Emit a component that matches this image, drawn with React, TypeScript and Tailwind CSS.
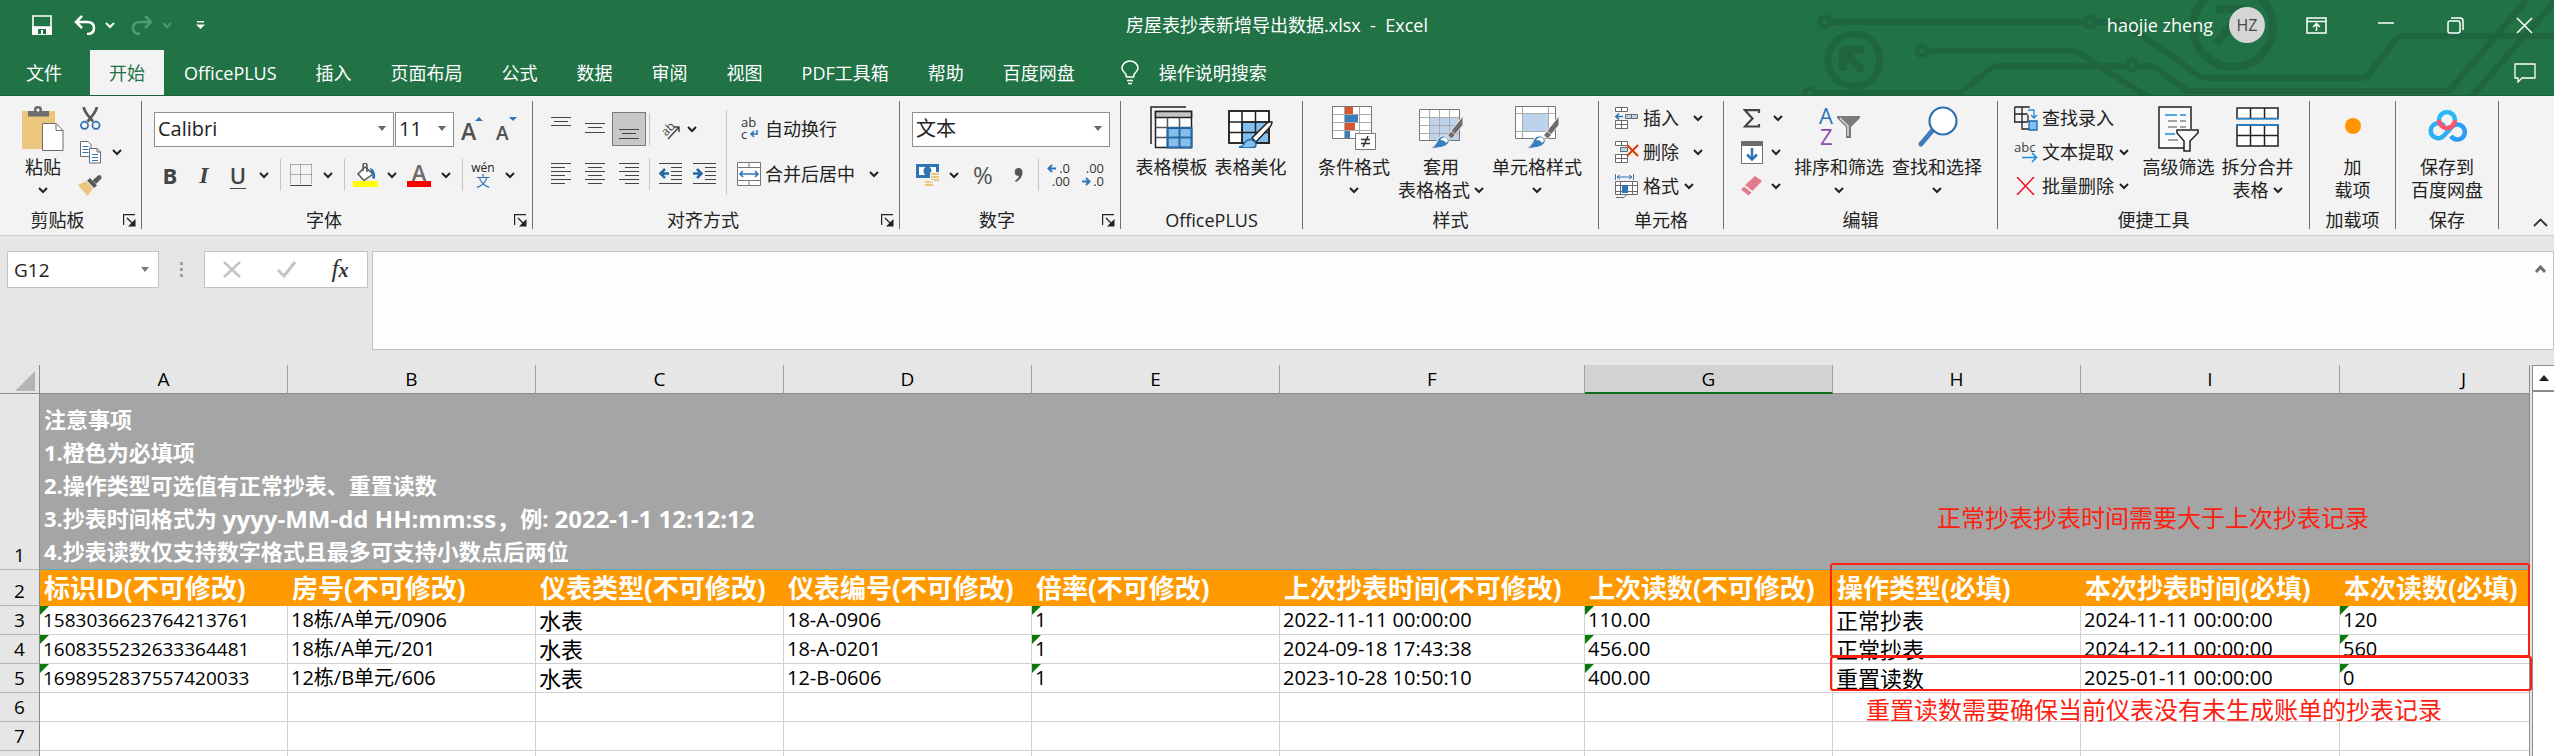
import React from 'react';
import clsx from 'clsx';

/* ---------- small shared pieces ---------- */

const Chevron = ({ className }: { className?: string }) => (
  <svg width="10" height="7" viewBox="0 0 10 7" className={clsx('shrink-0', className)} fill="none" stroke="currentColor" strokeWidth="2">
    <path d="M1 1l4 4 4-4" />
  </svg>
);

const Sep = ({ className }: { className?: string }) => <div className={clsx('h-8 w-px shrink-0 bg-[#c6c6c6]', className)} />;

interface IconButtonProps {
  label: string;
  className: string;
  children: React.ReactNode;
}

const IconButton = ({ label, className, children }: IconButtonProps) => (
  <button type="button" aria-label={label} className={clsx('flex h-[34px] shrink-0 items-center justify-center', className)}>
    {children}
  </button>
);

interface GroupProps {
  name: string;
  className: string;
  launcher?: boolean;
  children: React.ReactNode;
}

const Group = ({ name, className, launcher, children }: GroupProps) => (
  <section aria-label={name} className={clsx('flex h-32 shrink-0 flex-col border-r border-[#6e6e6e]', className)}>
    <div className="flex flex-1">{children}</div>
    <div className="flex h-[18px] items-center leading-[18px]">
      <span className="flex-1 text-center">{name}</span>
      {launcher && (
        <button type="button" aria-label={`${name}设置`} className="w-[26px] pl-2">
          <svg width="13" height="13" viewBox="0 0 13 13" fill="none" stroke="#222">
            <path d="M.5 11V.5H12M4 4l6 6" strokeWidth="1.4" />
            <path d="M12.5 5v7.500H5z" fill="#222" stroke="none" />
          </svg>
        </button>
      )}
    </div>
  </section>
);

interface BigButtonProps {
  icon: React.ReactNode;
  lines: string[];
  arrow?: boolean;
  className: string;
}

const BigButton = ({ icon, lines, arrow, className }: BigButtonProps) => (
  <button type="button" className={clsx('flex shrink-0 flex-col items-center pt-[5px] leading-[23px]', className)}>
    <span className="flex h-[50px] items-start justify-center">{icon}</span>
    <span className="whitespace-nowrap">{lines[0]}</span>
    {(lines[1] || arrow) && (
      <span className="flex h-[23px] items-center gap-1 whitespace-nowrap">
        {lines[1]}
        {arrow && <Chevron />}
      </span>
    )}
  </button>
);

interface SmallButtonProps {
  icon: React.ReactNode;
  text: string;
  arrow?: string;
}

const SmallButton = ({ icon, text, arrow }: SmallButtonProps) => (
  <button type="button" className="flex h-[34px] items-center leading-8 whitespace-nowrap">
    <span className="flex w-[28px] items-center">{icon}</span>
    {text}
    {arrow && <Chevron className={arrow} />}
  </button>
);

/* ---------- icons ---------- */

const PasteIcon = () => (
  <svg width="42" height="46" viewBox="0 0 42 46">
    <rect x="0" y="5" width="33" height="38" rx="1" fill="#ecc67d" />
    <path d="M6 10.500V5h6V3q0-3 4-3t4 3v2h7v5.500z" fill="#6d6d6d" />
    <circle cx="16" cy="4" r="1.500" fill="#fff" />
    <path d="M20.500 17.500H34l7 7v20H20.500z" fill="#fff" stroke="#6d6d6d" />
    <path d="M34 17.500v7h7" fill="none" stroke="#6d6d6d" />
  </svg>
);

const CutIcon = () => (
  <svg width="21" height="23" viewBox="0 0 21 23" fill="none">
    <path d="M3.500 0Q5 6 13 14.500M17 0Q15.500 6 7.500 14.500" stroke="#5a5a5a" strokeWidth="2.800" />
    <circle cx="4.500" cy="18.300" r="3.600" stroke="#2e6fb0" strokeWidth="1.700" />
    <circle cx="16" cy="18.300" r="3.600" stroke="#2e6fb0" strokeWidth="1.700" />
  </svg>
);

const CopyIcon = () => (
  <svg width="21" height="23" viewBox="0 0 21 23" fill="#fff" stroke="#6a6a6a">
    <path d="M.5 .5H8l3 3v12H.5z" />
    <path d="M2.500 5.500h6M2.500 8.500h6M2.500 11.500h6" stroke="#2e75b6" />
    <path d="M9.500 7.500H17l3.500 3.500v11h-11z" />
    <path d="M12 13.500h6M12 16.500h6M12 19.500h6" stroke="#2e75b6" />
    <path d="M17 7.500v3.500h3.500" fill="none" />
  </svg>
);

const BrushIcon = () => (
  <svg width="24" height="22" viewBox="0 0 24 22">
    <path d="M0 10l8-4 7 7.500L9.500 21z" fill="#ecc67d" />
    <path d="M9 5.500l3-2.500 7 7.500-3 2.500z" fill="#5a5a5a" />
    <path d="M14.500 5.500L20 .5q2-1 3 .5t0 3l-5 5z" fill="#5a5a5a" />
  </svg>
);

const GrowFont = ({ down }: { down?: boolean }) => (
  <svg width="24" height="26" viewBox="0 0 24 26" fontWeight="600" fill="#505050">
    <text x="1" y="24" fontSize={down ? 19 : 23}>A</text>
    <path d={down ? 'M14 1h8l-4 4z' : 'M15 5h8l-4-4z'} fill="#2e75b6" />
  </svg>
);

const BorderIcon = () => (
  <svg width="22" height="22" viewBox="0 0 22 22" fill="none" stroke="#6a6a6a">
    <path d="M.5 .5h21M.5 10.500h21M.5 .5v20M10.500 .5v20M21.500 .5v20" strokeDasharray="1 1" />
    <path d="M0 21.500h22" stroke="#444" />
  </svg>
);

const BucketIcon = () => (
  <svg width="25" height="24" viewBox="0 0 25 24">
    <path d="M12 4l8 7-9 6.500-6-6.500z" fill="#fff" stroke="#555" strokeWidth="1.500" />
    <path d="M10 8V3q0-3 2-3t2 3v6" fill="none" stroke="#555" strokeWidth="1.500" />
    <path d="M17 5q6 1 5 11l-3-1q1-4-1-6z" fill="#2e75b6" />
    <path d="M0 18h25v6H0z" fill="#ff0" />
  </svg>
);

const FontColorIcon = () => (
  <svg width="24" height="26" viewBox="0 0 24 26">
    <text x="12" y="19" textAnchor="middle" fontSize="22" fontWeight="600" fill="#6a6a6a">A</text>
    <path d="M0 19h24v6H0z" fill="red" />
  </svg>
);

/* horizontal text lines, one entry for each: [x1, x2, y] */
const Lines = ({ rows, h = 22 }: { rows: number[][]; h?: number }) => (
  <svg width="22" height={h} viewBox={`0 0 22 ${h}`} stroke="#444">
    {rows.map(([a, b, y]) => (
      <path key={y} d={`M${a} ${y}.5H${b}`} />
    ))}
  </svg>
);

const IndentIcon = ({ out }: { out?: boolean }) => (
  <svg width="23" height="22" viewBox="0 0 23 22" fill="none" stroke="#444">
    <path d="M0 .5h23M12 4.500h11M12 8.500h11M12 12.500h11M12 16.500h11M0 20.500h23" />
    <path d={out ? 'M10 10.500H2M6 6l-4.500 4.500L6 15' : 'M0 10.500h8M4 6l4.500 4.500L4 15'} stroke="#2566a3" strokeWidth="2.500" />
  </svg>
);

const OrientationIcon = () => (
  <svg width="26" height="26" viewBox="0 0 26 26" fill="none" stroke="#444">
    <text x="4" y="17" transform="rotate(-45 11 13)" fontSize="12" fill="#444" stroke="none">ab</text>
    <path d="M11 23L22 11M17 11h5v5" strokeWidth="1.500" />
  </svg>
);

const WrapIcon = () => (
  <svg width="24" height="30" viewBox="0 0 24 30" fontSize="13" fill="#333">
    <text x="4" y="13">ab</text>
    <text x="4" y="25">c</text>
    <path d="M20 16v4h-6M17 17l-3 3 3 3" fill="none" stroke="#2e75b6" strokeWidth="1.600" />
  </svg>
);

const MergeIcon = () => (
  <svg width="24" height="24" viewBox="0 0 24 24" fill="#fff" stroke="#777">
    <path d="M.5 .5h23v23H.5zM12 .5v5M12 18.500v5M.5 5.500h23M.5 18.500h23" />
    <path d="M3 12h18M6 9l-3 3 3 3M18 9l3 3-3 3" fill="none" stroke="#2e75b6" strokeWidth="1.600" />
  </svg>
);

const MoneyIcon = () => (
  <svg width="24" height="23" viewBox="0 0 24 23">
    <path d="M0 0h23v14H0z" fill="#2e75b6" />
    <path d="M3 3h17v8H3z" fill="#fff" />
    <ellipse cx="11.500" cy="7" rx="4" ry="4.500" fill="#2e75b6" />
    <g fill="#ecc67d" stroke="#f3f3f3">
      <path d="M14.500 8.500h9v3h-9zM14.500 11.500h9v3h-9zM14.500 14.500h9v3h-9zM8.500 16.500h9v3h-9zM8.500 19.500h9v3h-9z" />
    </g>
  </svg>
);

const DecimalIcon = ({ less }: { less?: boolean }) => (
  <svg width="24" height="32" viewBox="0 0 24 32" fontSize="13" fill="#333">
    <text x="23" y="14" textAnchor="end">{less ? '.00' : '.0'}</text>
    <text x="23" y="27" textAnchor="end">{less ? '.0' : '.00'}</text>
    <path
      d={less ? 'M1 22.500h7M5 19l3.500 3.500L5 26' : 'M9 9.500H2M5 6L1.500 9.500 5 13'}
      fill="none"
      stroke="#2e75b6"
      strokeWidth="2"
    />
  </svg>
);

const TemplateIcon = () => (
  <svg width="43" height="43" viewBox="0 0 43 43" fill="none" stroke="#222" strokeWidth="1.500">
    <path d="M1 38V1h35" />
    <path d="M5.500 5.500h36v36h-36z" fill="#fff" />
    <path d="M5.500 5.500h36v6h-36z" fill="#c4c4c4" />
    <path d="M17.500 22h24v19.500h-24z" fill="#83beec" />
    <path d="M5.500 21.500h36M5.500 31.500h36M17.500 11.500v30M29.500 11.500v30" stroke="#555" />
    <path d="M17.500 22h24v19.500h-24zM29.500 22v19.500M17.500 31.500h24" stroke="#1a6ab5" />
  </svg>
);

const BeautifyIcon = () => (
  <svg width="45" height="42" viewBox="0 0 45 42" fill="none" stroke="#222" strokeWidth="1.500">
    <path d="M1 5h40v32H1z" fill="#fff" />
    <path d="M14 16h27v21H14z" fill="#83beec" />
    <path d="M1 5h40v32H1zM1 16h40M1 26.500h40M14 5v32M27.500 5v32" />
    <path d="M44 16q-3-1-6 2L24 32l4 4 13-14q3-3 3-6z" fill="#fff" />
    <path d="M11 41q4 0 6-5 5-5 10 0 2 3 0 5-8 2-16 0z" fill="#83beec" stroke="#1a6ab5" />
  </svg>
);

const ConditionalIcon = () => (
  <svg width="44" height="44" viewBox="0 0 44 44" fill="none" stroke="#777">
    <path d="M.5 .5h39v32H.5z" fill="#fff" />
    <path d="M.5 8.500h39M.5 16.500h39M.5 24.500h39M12.500 .5v32M27.500 .5v32" stroke="#aaa" />
    <path d="M.5 .5h39v32H.5z" />
    <path d="M13 1h8v7h-8zM13 17h10v7H13z" fill="#d9572f" stroke="none" />
    <path d="M13 9h13v7H13zM13 25h5v7h-5z" fill="#3c7dbd" stroke="none" />
    <path d="M23.500 27.500h20v16h-20z" fill="#fff" />
    <path d="M29 33.500h9M29 37.500h9M36 30l-5 11" stroke="#333" strokeWidth="1.500" />
  </svg>
);

const StyleBrush = () => (
  <>
    <path d="M44 10v9L35 30l-4-4z" fill="#6d6d6d" stroke="#f3f3f3" />
    <path d="M32.500 25l4 4-4 4-4-4z" fill="#6d6d6d" stroke="#f3f3f3" />
    <path d="M11 42q6-2 8-9 4-5 9-2 4 3 1 7-5 5-18 4z" fill="#3c7dbd" stroke="#f3f3f3" />
    <path d="M21 34q3-4 7-2 2 3-1 5-1-3-6-3z" fill="#fff" stroke="none" />
  </>
);

const TableFormatIcon = () => (
  <svg width="44" height="43" viewBox="0 0 44 43" fill="none">
    <path d="M.5 3.500h40v31H.5z" fill="#fff" />
    <path d="M11 12h30v22.500H11z" fill="#bdd3ec" />
    <path d="M.5 11.500h40M.5 19.500h40M.5 27.500h40M10.500 3.500v31M20.500 3.500v31M30.500 3.500v31" stroke="#aaa" />
    <path d="M.5 3.500h40v31H.5z" stroke="#777" />
    <StyleBrush />
  </svg>
);

const CellStyleIcon = () => (
  <svg width="44" height="43" viewBox="0 0 44 43" fill="none">
    <path d="M.5 .5h40v32H.5z" fill="#fff" />
    <path d="M8 8h26v17H8z" fill="#bdd3ec" />
    <path d="M.5 7.500h40M.5 25.500h40M7.500 .5v32M33.500 .5v32" stroke="#aaa" />
    <path d="M.5 .5h40v32H.5z" stroke="#777" />
    <StyleBrush />
  </svg>
);

const InsertCellIcon = () => (
  <svg width="24" height="23" viewBox="0 0 24 23" fill="#fff" stroke="#6a6a6a">
    <path d="M.5 .5h12v4H.5zM6.500 .5v4M.5 13.500h12v8H.5zM6.500 13.500v8M.5 17.500h12" />
    <path d="M10.500 7.500h12v4h-12zM16.500 7.500v4" fill="#bdd3ec" />
    <path d="M8 9.500H1M4 6.500l-3 3 3 3" fill="none" stroke="#2e75b6" strokeWidth="1.600" />
  </svg>
);

const DeleteCellIcon = () => (
  <svg width="24" height="23" viewBox="0 0 24 23" fill="#fff" stroke="#6a6a6a">
    <path d="M.5 .5h12v4H.5zM6.500 .5v4M.5 13.500h12v8H.5zM6.500 13.500v8M.5 17.500h12" />
    <path d="M5.500 6.500h7v4h-7z" fill="#bdd3ec" />
    <path d="M12 4l11 11M23 4L12 15" fill="none" stroke="#d83b01" strokeWidth="2" />
  </svg>
);

const FormatCellIcon = () => (
  <svg width="24" height="24" viewBox="0 0 24 24" fill="#fff" stroke="#6a6a6a">
    <path d="M.5 0v6M18.500 0v6M2 3h15M5 1L2 3l3 2M14 1l3 2-3 2" fill="none" stroke="#2e75b6" />
    <path d="M.5 7.500h22v13H.5zM.5 11.500h22M.5 17.500h22M5.500 7.500v13M17.500 7.500v13" />
    <path d="M7 11h6v8H7z" fill="#2e75b6" stroke="none" />
    <path d="M1 23.500h8l3-3h3" fill="none" />
  </svg>
);

const SigmaIcon = () => (
  <svg width="18" height="19" viewBox="0 0 18 19">
    <path d="M16 4V1.200H2L9.500 9.500 2 17.500h14V15" fill="none" stroke="#444" strokeWidth="2.200" />
  </svg>
);

const FillIcon = () => (
  <svg width="22" height="23" viewBox="0 0 22 23">
    <path d="M.5 .5h21v22H.5z" fill="#fff" stroke="#6d6d6d" />
    <path d="M0 0h22v5H0z" fill="#6d6d6d" />
    <path d="M11 7v11M6 13.500l5 5 5-5" fill="none" stroke="#2e75b6" strokeWidth="2.500" />
  </svg>
);

const EraserIcon = () => (
  <svg width="22" height="20" viewBox="0 0 22 20">
    <path d="M4 9L14 0l7 5-9.500 10z" fill="#e67a8d" />
    <path d="M3 10.500l7.500 6-3 3L0 13.500z" fill="#e67a8d" />
  </svg>
);

const SortIcon = () => (
  <svg width="43" height="46" viewBox="0 0 43 46" fontSize="22">
    <text x="1" y="18" fill="#2e75b6">A</text>
    <text x="2" y="39" fill="#8a4cb0">Z</text>
    <path d="M19 10h23v2l-9 9v11h-5V21l-9-9z" fill="#7a7a7a" />
    <path d="M22 12l8 8v10" fill="none" stroke="#ddd" strokeWidth="1.500" />
  </svg>
);

const FindIcon = () => (
  <svg width="41" height="41" viewBox="0 0 41 41" fill="none">
    <path d="M15 25L4 38" stroke="#3c7dbd" strokeWidth="5" strokeLinecap="round" />
    <circle cx="26" cy="15" r="13.500" fill="#fff" stroke="#2e6fb0" strokeWidth="2.200" />
  </svg>
);

const LookupIcon = () => (
  <svg width="24" height="25" viewBox="0 0 24 25" fill="none" stroke="#222" strokeWidth="1.300">
    <path d="M.7 1h15M.7 1v15h13M.7 8h13M8 1v15M8 16v7h7M14 9v7" />
    <path d="M15 15h8v9h-8z" fill="#83beec" stroke="#1a6ab5" />
    <path d="M14 4h6v8M17 9l3 3 3-3" stroke="#1e8bdc" />
  </svg>
);

const ExtractIcon = () => (
  <svg width="24" height="26" viewBox="0 0 24 26">
    <text x="0" y="13" fontSize="13" fill="#444">abc</text>
    <path d="M8 18.500h14M18 14l4.500 4.500L18 23" fill="none" stroke="#1e8bdc" strokeWidth="1.600" />
  </svg>
);

const BatchDeleteIcon = () => (
  <svg width="24" height="18" viewBox="0 0 24 18" stroke="#e81123" strokeWidth="1.500">
    <path d="M3 0l17 18M20 0L3 18" />
  </svg>
);

const AdvFilterIcon = () => (
  <svg width="41" height="46" viewBox="0 0 41 46" fill="none" strokeWidth="1.500">
    <path d="M27 42H1V1h32v22" fill="#fafafa" stroke="#222" />
    <path d="M7 9h12M22 9h6M7 28h10" stroke="#1e8bdc" />
    <path d="M10 15h9M22 15h6M10 21h9M22 21h6M10 34h10" stroke="#888" />
    <path d="M19 24h21v3l-8 8v10h-6V35l-7-8z" fill="#fafafa" stroke="#222" />
  </svg>
);

const SplitIcon = () => (
  <svg width="43" height="41" viewBox="0 0 43 41" fill="#fff" strokeWidth="1.500" stroke="#222">
    <path d="M1 2h41v10.500H1zM14.500 2v10M28.500 2v10M1 19h41v21H1zM1 29.500h41M14.500 19v21M28.500 19v21" />
    <path d="M0 12.800h43M0 19h43" stroke="#1e8bdc" />
  </svg>
);

const DotIcon = () => (
  <svg width="18" height="40" viewBox="0 0 18 40">
    <circle cx="9" cy="20" r="8" fill="#ff9400" />
  </svg>
);

const NetdiskIcon = () => (
  <svg width="40" height="38" viewBox="0 0 40 38" fill="none" strokeWidth="4.500">
    <path d="M17 20a7.500 7.500 0 1 0-1 10.500L24 22" stroke="#2bb0f6" />
    <path d="M24 22a7.500 7.500 0 1 1 0 8" stroke="#2a9df4" />
    <path d="M12 14a8 8 0 0 1 16 0" stroke="#2bb8f8" />
    <path d="M12 14a8 8 0 0 0 16 0" stroke="#f5586f" />
  </svg>
);

/* ---------- title bar ---------- */

const Circuit = () => (
  <svg className="absolute top-0 right-0" width="754" height="95" viewBox="1800 0 754 95" fill="none" stroke="#1f6540" strokeWidth="6">
    <circle cx="1825" cy="22" r="5" strokeWidth="5" />
    <path d="M1830 22h254M2095 22h28L2195 73q6 5 12 5h155q5 0 8-5l25-33q3-4 8-4h151" />
    <circle cx="2090" cy="22" r="5" strokeWidth="5" />
    <circle cx="1854" cy="60" r="26" strokeWidth="7" />
    <path d="M1843 71V50h21M1844 51l19 20" strokeWidth="8" />
    <circle cx="1810" cy="94" r="5" strokeWidth="5" />
    <path d="M1815 93h140q6 0 10-4l24-19q4-4 10-4h128" />
    <circle cx="1922" cy="51" r="5" strokeWidth="5" />
    <path d="M1927 51h143q6 0 12 4l68 43" />
    <circle cx="2132" cy="65" r="5" strokeWidth="5" />
    <path d="M2137 66h12q6 0 12 5l26 20h262L2530-4M2470 98l88-100" />
    <circle cx="2233" cy="27" r="40" strokeWidth="8" />
    <path d="M2216 9h30M2244 10l-28 33" strokeWidth="8" />
  </svg>
);

const TitleBar = () => (
  <div className="relative grid h-[50px] grid-cols-[1fr_auto_1fr] items-center text-white">
    <div className="flex items-center">
      <button type="button" aria-label="保存" className="ml-8">
        <svg width="20" height="20" viewBox="0 0 20 20" fill="none" stroke="#fff" strokeWidth="1.600">
          <path d="M1 1h18v18H1z" />
          <path d="M1 12h18v7H1z" fill="#fff" />
          <path d="M6 14h8v5H6z" fill="#217346" stroke="none" />
          <path d="M9 15h2v4H9z" fill="#fff" stroke="none" />
        </svg>
      </button>
      <button type="button" aria-label="撤消" className="ml-[22px] flex items-center gap-[9px]">
        <svg width="22" height="20" viewBox="0 0 22 20" fill="none" stroke="#fff" strokeWidth="2.500">
          <path d="M8 1L2 7l6 6M2 7h11q7 0 7 6t-7 6" />
        </svg>
        <Chevron />
      </button>
      <button type="button" aria-label="恢复" className="ml-4 flex items-center gap-[9px] text-[#4f9a71]">
        <svg width="22" height="20" viewBox="0 0 22 20" fill="none" stroke="currentColor" strokeWidth="2.500">
          <path d="M14 1l6 6-6 6M20 7H9q-7 0-7 6t7 6" />
        </svg>
        <Chevron />
      </button>
      <button type="button" aria-label="自定义快速访问工具栏" className="ml-6">
        <svg width="9" height="8" viewBox="0 0 9 8" fill="#fff">
          <path d="M1 0h7v1.500H1zM0 3.500h9L4.500 8z" />
        </svg>
      </button>
    </div>
    <h1 className="whitespace-pre">房屋表抄表新增导出数据.xlsx  -  Excel</h1>
    <div className="relative flex items-center justify-end">
      <span>haojie zheng</span>
      <span className="ml-4 flex size-9 items-center justify-center rounded-full bg-[#d5d5d5] text-base text-[#444]">HZ</span>
      <button type="button" aria-label="功能区显示选项" className="ml-[41px]">
        <svg width="21" height="17" viewBox="0 0 21 17" fill="none" stroke="#fff" strokeWidth="1.500">
          <path d="M1 1h19v15H1zM1 4.500h19M10.500 14V7M7 10l3.500-3.500L14 10" />
        </svg>
      </button>
      <button type="button" aria-label="最小化" className="ml-[51px]">
        <svg width="16" height="16" viewBox="0 0 16 16" stroke="#fff" strokeWidth="1.500">
          <path d="M0 6h16" />
        </svg>
      </button>
      <button type="button" aria-label="还原" className="ml-[53px]">
        <svg width="17" height="17" viewBox="0 0 17 17" fill="none" stroke="#fff" strokeWidth="1.500">
          <rect x="1" y="4" width="12" height="12" rx="2" />
          <path d="M4 1h9q3 0 3 3v9" />
        </svg>
      </button>
      <button type="button" aria-label="关闭" className="mr-[21px] ml-[52px]">
        <svg width="17" height="17" viewBox="0 0 17 17" stroke="#fff" strokeWidth="1.500">
          <path d="M1 1l15 15M16 1L1 16" />
        </svg>
      </button>
    </div>
  </div>
);

const tabs = ['文件', '开始', 'OfficePLUS', '插入', '页面布局', '公式', '数据', '审阅', '视图', 'PDF工具箱', '帮助', '百度网盘'];

const TabBar = () => (
  <nav className="relative flex h-[45px] items-stretch gap-px pl-[7px] text-white">
    {tabs.map((tab) => (
      <button
        key={tab}
        type="button"
        className={clsx('shrink-0 px-[19px]', tab === '文件' && 'mr-2', tab === '开始' && 'bg-[#f3f3f3] text-[#217346]')}
      >
        {tab}
      </button>
    ))}
    <button type="button" className="ml-[26px] flex items-center gap-5">
      <svg width="18" height="25" viewBox="0 0 18 25" fill="none" stroke="#fff" strokeWidth="1.600">
        <path d="M5.500 17q0-3-2.500-5-2-2-2-4a8 7 0 0 1 16 0q0 2-2 4-2.500 2-2.500 5zM6 20.500h6M7 23.500h4" />
      </svg>
      操作说明搜索
    </button>
    <button type="button" aria-label="批注" className="mr-[18px] ml-auto">
      <svg width="22" height="20" viewBox="0 0 22 20" fill="none" stroke="#fff" strokeWidth="1.300">
        <path d="M1 1h20v14H8l-4 4v-4H1z" />
      </svg>
    </button>
  </nav>
);

/* ---------- ribbon ---------- */

const Combo = ({ label, value, className }: { label: string; value: string; className: string }) => (
  <div className={clsx('relative h-[35px] shrink-0', className)}>
    <select aria-label={label} className="h-full w-full appearance-none border border-[#8f8f8f] bg-white pb-px pl-[3px] text-xl leading-6 text-[#222]">
      <option>{value}</option>
    </select>
    <svg className="pointer-events-none absolute top-[14px] right-2" width="8" height="5" viewBox="0 0 8 5" fill="#666">
      <path d="M0 0h8L4 5z" />
    </svg>
  </div>
);

const Ribbon = () => (
  <div className="flex border-b border-[#cfcfcf] bg-[#f3f3f3] pt-[5px] pb-[6px] text-[#222]">
    <Group name="剪贴板" className="w-[142px]" launcher>
      <BigButton icon={<PasteIcon />} lines={['粘贴']} arrow className="ml-5 w-[46px]" />
      <div className="ml-3 flex flex-col">
        <IconButton label="剪切" className="w-[24px]"><CutIcon /></IconButton>
        <div className="flex">
          <IconButton label="复制" className="w-[24px]"><CopyIcon /></IconButton>
          <IconButton label="复制选项" className="w-[30px]"><Chevron /></IconButton>
        </div>
        <IconButton label="格式刷" className="w-[24px]"><BrushIcon /></IconButton>
      </div>
    </Group>

    <Group name="字体" className="w-[391px]" launcher>
      <div className="flex flex-col gap-[11px] pt-[11px]">
        <div className="flex pl-3">
          <Combo label="字体名称" value="Calibri" className="w-[240px]" />
          <Combo label="字号" value="11" className="ml-px w-[59px]" />
          <IconButton label="增大字号" className="w-[35px]"><GrowFont /></IconButton>
          <IconButton label="减小字号" className="w-[35px]"><GrowFont down /></IconButton>
        </div>
        <div className="flex items-center pl-[11px]">
          <IconButton label="加粗" className="w-[34px] text-[22px] font-bold text-[#444]">B</IconButton>
          <IconButton label="倾斜" className="w-[34px] font-['Liberation_Serif',serif] text-2xl font-bold text-[#444] italic">I</IconButton>
          <IconButton label="下划线" className="w-[34px] text-[22px] font-semibold text-[#444] underline decoration-1 underline-offset-4">U</IconButton>
          <IconButton label="下划线选项" className="w-[18px]"><Chevron /></IconButton>
          <Sep className="mr-[2px] ml-[7px]" />
          <IconButton label="边框" className="w-9"><BorderIcon /></IconButton>
          <IconButton label="边框选项" className="w-[18px]"><Chevron /></IconButton>
          <Sep className="mr-[2px] ml-[7px]" />
          <IconButton label="填充颜色" className="w-9"><BucketIcon /></IconButton>
          <IconButton label="填充颜色选项" className="w-[18px]"><Chevron /></IconButton>
          <IconButton label="字体颜色" className="w-9"><FontColorIcon /></IconButton>
          <IconButton label="字体颜色选项" className="w-[18px]"><Chevron /></IconButton>
          <Sep className="mr-[2px] ml-[7px]" />
          <IconButton label="显示拼音" className="w-9 flex-col">
            <span className="text-xs leading-3">wén</span>
            <span className="text-sm leading-[14px] text-[#2e75b6]">文</span>
          </IconButton>
          <IconButton label="拼音选项" className="w-[18px]"><Chevron /></IconButton>
        </div>
      </div>
    </Group>

    <Group name="对齐方式" className="w-[367px]" launcher>
      <div className="flex flex-col gap-[11px] pt-[11px] pl-[11px]">
        <div className="flex items-center">
          <IconButton label="顶端对齐" className="w-[34px]">
            <Lines rows={[[1, 21, 5], [4, 18, 9], [1, 21, 13]]} h={34} />
          </IconButton>
          <IconButton label="垂直居中" className="w-[34px]">
            <Lines rows={[[1, 21, 11], [4, 18, 15], [1, 21, 20]]} h={34} />
          </IconButton>
          <IconButton label="底端对齐" className="w-[34px] border border-[#7a7a7a] bg-[#c8c8c8]">
            <Lines rows={[[1, 21, 17], [4, 18, 21], [1, 21, 26]]} h={34} />
          </IconButton>
          <Sep className="mx-[3px]" />
          <IconButton label="方向" className="w-[34px]"><OrientationIcon /></IconButton>
          <IconButton label="方向选项" className="w-[10px]"><Chevron /></IconButton>
        </div>
        <div className="flex items-center">
          <IconButton label="左对齐" className="w-[34px]">
            <Lines rows={[[1, 21, 0], [1, 15, 4], [1, 21, 8], [1, 15, 12], [1, 21, 16], [1, 15, 20]]} />
          </IconButton>
          <IconButton label="居中" className="w-[34px]">
            <Lines rows={[[1, 21, 0], [4, 18, 4], [1, 21, 8], [4, 18, 12], [1, 21, 16], [4, 18, 20]]} />
          </IconButton>
          <IconButton label="右对齐" className="w-[34px]">
            <Lines rows={[[1, 21, 0], [7, 21, 4], [1, 21, 8], [7, 21, 12], [1, 21, 16], [7, 21, 20]]} />
          </IconButton>
          <Sep className="mx-[3px]" />
          <IconButton label="减少缩进量" className="w-[34px]"><IndentIcon out /></IconButton>
          <IconButton label="增加缩进量" className="w-[34px]"><IndentIcon /></IconButton>
        </div>
      </div>
      <div className="mt-[9px] ml-[5px] h-[85px] w-px bg-[#c6c6c6]" />
      <div className="flex flex-col gap-[11px] pt-[11px] pl-[10px]">
        <SmallButton icon={<WrapIcon />} text="自动换行" />
        <SmallButton icon={<MergeIcon />} text="合并后居中" arrow="ml-[14px]" />
      </div>
    </Group>

    <Group name="数字" className="w-[221px]" launcher>
      <div className="flex flex-col gap-[11px] pt-[11px] pl-3">
        <Combo label="数字格式" value="文本" className="w-[198px]" />
        <div className="flex items-center">
          <IconButton label="会计数字格式" className="w-8"><MoneyIcon /></IconButton>
          <IconButton label="会计格式选项" className="w-5"><Chevron /></IconButton>
          <IconButton label="百分比样式" className="w-[38px] text-2xl text-[#555]">%</IconButton>
          <IconButton label="千位分隔样式" className="w-8">
            <svg width="9" height="14" viewBox="0 0 10 16" fill="#555">
              <path d="M5 0a4.500 4.500 0 0 1 4.500 5Q9.500 12 2 16l-1-1.500Q5 12 5.500 9A4.500 4.500 0 1 1 5 0z" />
            </svg>
          </IconButton>
          <Sep className="mr-[3px] ml-[4px]" />
          <IconButton label="增加小数位数" className="w-[34px]"><DecimalIcon /></IconButton>
          <IconButton label="减少小数位数" className="w-[34px]"><DecimalIcon less /></IconButton>
        </div>
      </div>
    </Group>

    <Group name="OfficePLUS" className="w-[182px]">
      <BigButton icon={<TemplateIcon />} lines={['表格模板']} className="ml-[11px] w-[79px]" />
      <BigButton icon={<BeautifyIcon />} lines={['表格美化']} className="w-[79px]" />
    </Group>

    <Group name="样式" className="w-[296px]">
      <BigButton icon={<ConditionalIcon />} lines={['条件格式']} arrow className="ml-[11px] w-[80px]" />
      <BigButton icon={<TableFormatIcon />} lines={['套用', '表格格式']} arrow className="w-[94px]" />
      <BigButton icon={<CellStyleIcon />} lines={['单元格样式']} arrow className="w-[98px]" />
    </Group>

    <Group name="单元格" className="w-[125px]">
      <div className="flex flex-col pl-4">
        <SmallButton icon={<InsertCellIcon />} text="插入" arrow="ml-[14px]" />
        <SmallButton icon={<DeleteCellIcon />} text="删除" arrow="ml-[14px]" />
        <SmallButton icon={<FormatCellIcon />} text="格式" arrow="ml-[5px]" />
      </div>
    </Group>

    <Group name="编辑" className="w-[274px]">
      <div className="flex flex-col pl-[14px]">
        <div className="flex">
          <IconButton label="自动求和" className="w-[28px]"><SigmaIcon /></IconButton>
          <IconButton label="求和选项" className="w-[24px]"><Chevron /></IconButton>
        </div>
        <div className="flex">
          <IconButton label="填充" className="w-[28px]"><FillIcon /></IconButton>
          <IconButton label="填充选项" className="w-[20px]"><Chevron /></IconButton>
        </div>
        <div className="flex">
          <IconButton label="清除" className="w-[28px]"><EraserIcon /></IconButton>
          <IconButton label="清除选项" className="w-[20px]"><Chevron /></IconButton>
        </div>
      </div>
      <BigButton icon={<SortIcon />} lines={['排序和筛选']} arrow className="w-[98px]" />
      <BigButton icon={<FindIcon />} lines={['查找和选择']} arrow className="w-[98px]" />
    </Group>

    <Group name="便捷工具" className="w-[312px]">
      <div className="flex flex-col pl-4">
        <SmallButton icon={<LookupIcon />} text="查找录入" />
        <SmallButton icon={<ExtractIcon />} text="文本提取" arrow="ml-[5px]" />
        <SmallButton icon={<BatchDeleteIcon />} text="批量删除" arrow="ml-[5px]" />
      </div>
      <BigButton icon={<AdvFilterIcon />} lines={['高级筛选']} className="ml-[10px] w-[79px]" />
      <BigButton icon={<SplitIcon />} lines={['拆分合并', '表格']} arrow className="w-[79px]" />
    </Group>

    <Group name="加载项" className="w-[86px]">
      <BigButton icon={<DotIcon />} lines={['加', '载项']} className="w-full" />
    </Group>

    <Group name="保存" className="w-[103px]">
      <BigButton icon={<NetdiskIcon />} lines={['保存到', '百度网盘']} className="w-full" />
    </Group>

    <button type="button" aria-label="折叠功能区" className="mr-[6px] ml-auto self-end pb-[2px]">
      <svg width="15" height="9" viewBox="0 0 15 9" fill="none" stroke="#333" strokeWidth="1.800">
        <path d="M1 8l6.500-6.500L14 8" />
      </svg>
    </button>
  </div>
);

/* ---------- formula bar ---------- */

const FormulaBar = () => (
  <div className="flex h-[129px] items-start pt-[15px] pl-[7px]">
    <div className="relative h-[37px] w-[152px] shrink-0">
      <input aria-label="名称框" defaultValue="G12" className="h-full w-full border border-[#c3c3c3] bg-white pl-[6px] text-[19px] text-[#222]" />
      <svg className="absolute top-4 right-[10px]" width="8" height="5" viewBox="0 0 8 5" fill="#777">
        <path d="M0 0h8L4 5z" />
      </svg>
    </div>
    <div className="flex h-[37px] w-[45px] shrink-0 items-center justify-center">
      <svg width="3" height="16" viewBox="0 0 3 16" fill="#a0a0a0">
        <path d="M0 0h3v3H0zM0 6h3v3H0zM0 12h3v3H0z" />
      </svg>
    </div>
    <div className="flex h-[37px] w-[164px] shrink-0 items-center border border-[#c3c3c3] bg-white">
      <button type="button" aria-label="取消" className="flex w-[54px] justify-center">
        <svg width="18" height="17" viewBox="0 0 18 17" stroke="#c4c4c4" strokeWidth="2.500">
          <path d="M1 1l16 15M17 1L1 16" />
        </svg>
      </button>
      <button type="button" aria-label="输入" className="flex w-[54px] justify-center">
        <svg width="19" height="17" viewBox="0 0 19 17" fill="none" stroke="#c4c4c4" strokeWidth="3">
          <path d="M1 9l6 6L18 1" />
        </svg>
      </button>
      <button type="button" aria-label="插入函数" className="w-[54px] text-center font-['Liberation_Serif',serif] text-[26px] leading-6 text-[#333] italic">
        f<span className="text-xl font-bold">x</span>
      </button>
    </div>
    <div className="relative ml-1 h-[99px] flex-1">
      <textarea aria-label="编辑栏" className="block h-full w-full resize-none border border-[#c3c3c3] bg-[#fdfdfd]" />
      <button type="button" aria-label="折叠编辑栏" className="absolute top-[14px] right-2">
        <svg width="11" height="8" viewBox="0 0 11 8" fill="none" stroke="#707070" strokeWidth="3">
          <path d="M1 7l4.500-5L10 7" />
        </svg>
      </button>
    </div>
  </div>
);

/* ---------- sheet ---------- */

const columns = [
  { id: 'A', width: 'w-[248px]', size: 'text-[19px]', title: '标识ID(不可修改)' },
  { id: 'B', width: 'w-[248px]', size: 'text-xl', title: '房号(不可修改)' },
  { id: 'C', width: 'w-[248px]', size: 'text-[22px]', title: '仪表类型(不可修改)' },
  { id: 'D', width: 'w-[248px]', size: 'text-xl', title: '仪表编号(不可修改)' },
  { id: 'E', width: 'w-[248px]', size: 'text-xl', title: '倍率(不可修改)' },
  { id: 'F', width: 'w-[305px]', size: 'text-xl', title: '上次抄表时间(不可修改)' },
  { id: 'G', width: 'w-[248px]', size: 'text-xl', title: '上次读数(不可修改)' },
  { id: 'H', width: 'w-[248px]', size: 'text-[22px]', title: '操作类型(必填)' },
  { id: 'I', width: 'w-[259px]', size: 'text-xl', title: '本次抄表时间(必填)' },
  { id: 'J', width: 'w-[248px]', size: 'text-xl', title: '本次读数(必填)' },
];

const records = [
  ['1583036623764213761', '18栋/A单元/0906', '水表', '18-A-0906', '1', '2022-11-11 00:00:00', '110.00', '正常抄表', '2024-11-11 00:00:00', '120'],
  ['1608355232633364481', '18栋/A单元/201', '水表', '18-A-0201', '1', '2024-09-18 17:43:38', '456.00', '正常抄表', '2024-12-11 00:00:00', '560'],
  ['1698952837557420033', '12栋/B单元/606', '水表', '12-B-0606', '1', '2023-10-28 10:50:10', '400.00', '重置读数', '2025-01-11 00:00:00', '0'],
];

// columns whose numbers are stored as text carry the green corner mark
const flagged = ['A', 'E', 'G', 'J'];

const RowHead = ({ n }: { n: number }) => (
  <th scope="row" className="border-r border-b border-r-[#8c8c8c] border-b-[#b5b5b5] bg-[#e6e6e6] p-0 text-center align-bottom text-[19px] leading-7 font-normal">
    {n}
  </th>
);

const Sheet = () => (
  <div className="relative min-w-0 flex-1">
    <div className="h-full overflow-hidden border-r border-[#8c8c8c]">
      <table className="w-[2588px] table-fixed border-separate border-spacing-0 whitespace-nowrap text-black">
        <colgroup>
          <col className="w-10" />
          {columns.map((c) => (
            <col key={c.id} className={c.width} />
          ))}
        </colgroup>
        <thead>
          <tr className="h-[29px]">
            <th className="border-r border-b border-[#8c8c8c] bg-[#e6e6e6] p-0">
              <svg className="mt-1 mr-1 ml-auto" width="20" height="20" viewBox="0 0 20 20" fill="#b4b4b4">
                <path d="M20 0v20H0z" />
              </svg>
            </th>
            {columns.map((c) => (
              <th
                key={c.id}
                scope="col"
                className={clsx(
                  'border-r p-0 text-center text-[19px] leading-6 font-normal',
                  c.id === 'G' ? 'border-b-2 border-r-[#a0a0a0] border-b-[#0e6b1a] bg-[#d2d2d2]' : 'border-b border-r-[#a0a0a0] border-b-[#8c8c8c] bg-[#e6e6e6]'
                )}
              >
                {c.id}
              </th>
            ))}
          </tr>
        </thead>
        <tbody>
          <tr className="h-[176px]">
            <RowHead n={1} />
            <td colSpan={10} className="border-b border-[#5fa8c4] bg-[#a5a5a5] p-0 pt-2 pl-1 text-[22px] leading-[33px] font-bold text-white">
              <p>注意事项</p>
              <p>1.橙色为必填项</p>
              <p>2.操作类型可选值有正常抄表、重置读数</p>
              <p className="flex items-center">
                3.抄表时间格式为
                <span className="ml-[6px] text-2xl leading-[33px]">yyyy-MM-dd HH:mm:ss，</span>
                例:
                <span className="ml-[6px] text-2xl leading-[33px]">2022-1-1 12:12:12</span>
              </p>
              <p>4.抄表读数仅支持数字格式且最多可支持小数点后两位</p>
            </td>
          </tr>
          <tr className="h-9">
            <RowHead n={2} />
            {columns.map((c) => (
              <td key={c.id} className="bg-[#ff9900] p-0 pl-1 text-[26px] leading-[34px] font-bold text-white">
                {c.title}
              </td>
            ))}
          </tr>
          {records.map((record, i) => (
            <tr key={record[0]} className="h-[29px]">
              <RowHead n={i + 3} />
              {record.map((value, j) => (
                <td
                  key={columns[j].id}
                  className={clsx('relative border-r border-b border-[#d0d0d0] bg-white p-0 pl-[3px] leading-7', columns[j].size)}
                >
                  {flagged.includes(columns[j].id) && (
                    <svg className="absolute top-0 left-0" width="9" height="9" viewBox="0 0 9 9" fill="#0a7a0a">
                      <path d="M0 0h9L0 9z" />
                    </svg>
                  )}
                  {value}
                </td>
              ))}
            </tr>
          ))}
          {[6, 7, 8].map((n) => (
            <tr key={n} className="h-[29px]">
              <RowHead n={n} />
              {columns.map((c) => (
                <td key={c.id} className="border-r border-b border-[#d0d0d0] bg-white p-0" />
              ))}
            </tr>
          ))}
        </tbody>
      </table>
    </div>

    {/* review marks drawn over the cells */}
    <p className="absolute top-[137px] left-[1937px] text-2xl whitespace-nowrap text-[#ff2010]">正常抄表抄表时间需要大于上次抄表记录</p>
    <div className="absolute top-[198px] left-[1830px] h-[94px] w-[700px] rounded-[3px] border-2 border-[#ff2010]" />
    <div className="absolute top-[291px] left-[1830px] h-[35px] w-[702px] rounded-[3px] border-2 border-[#ff2010]" />
    <p className="absolute top-[329px] left-[1866px] text-2xl whitespace-nowrap text-[#ff2010]">重置读数需要确保当前仪表没有未生成账单的抄表记录</p>
  </div>
);

const ScrollBar = () => (
  <div className="ml-[2px] flex w-[22px] flex-col border-l border-[#8c8c8c] bg-white">
    <button type="button" aria-label="向上滚动" className="flex h-[27px] items-center justify-center border-t border-b-2 border-[#8c8c8c]">
      <svg width="10" height="6" viewBox="0 0 10 6" fill="#222">
        <path d="M5 0l5 6H0z" />
      </svg>
    </button>
  </div>
);

export default function App() {
  return (
    <div className="flex h-screen flex-col overflow-hidden bg-[#e6e6e6] font-['Open_Sans','Noto_Sans_CJK_SC',sans-serif] text-lg">
      <header className="relative shrink-0 border-b border-[#1a6339] bg-[#217346]">
        <Circuit />
        <TitleBar />
        <TabBar />
      </header>
      <Ribbon />
      <FormulaBar />
      <main className="flex min-h-0 flex-1">
        <Sheet />
        <ScrollBar />
      </main>
    </div>
  );
}
